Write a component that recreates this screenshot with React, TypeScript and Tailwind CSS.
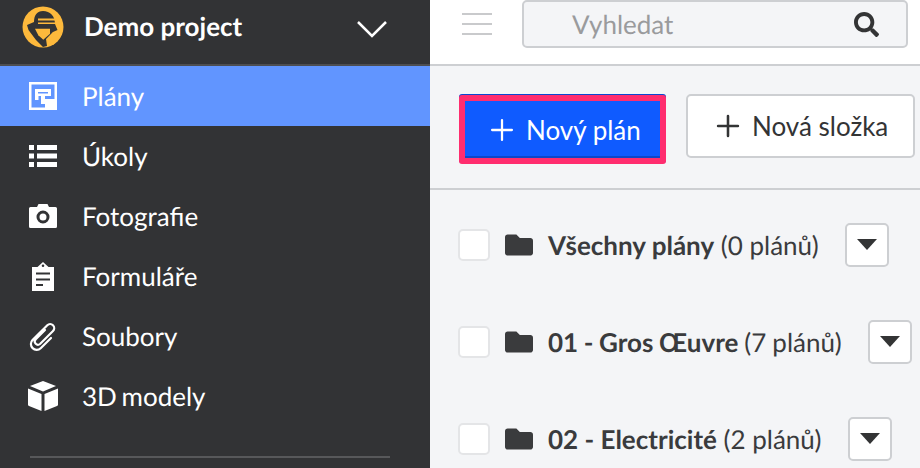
import React from 'react';
import { Plus } from 'lucide-react';
import { FaFolder, FaSearch } from 'react-icons/fa';

const NAV_ITEMS = [
  { label: 'Plány', icon: 'plan', active: true },
  { label: 'Úkoly', icon: 'list' },
  { label: 'Fotografie', icon: 'camera' },
  { label: 'Formuláře', icon: 'form' },
  { label: 'Soubory', icon: 'clip' },
  { label: '3D modely', icon: 'cube', tight: true },
];

const FOLDERS = [
  { name: 'Všechny plány', count: '(0 plánů)', spacing: '' },
  { name: '01 - Gros Œuvre', count: '(7 plánů)', spacing: '[word-spacing:-0.7px]' },
  { name: '02 - Electricité', count: '(2 plánů)', spacing: '' },
];

const NavIcon: React.FC<{ name: string }> = ({ name }) => {
  switch (name) {
    case 'plan':
      return (
        <svg width="28" height="28" viewBox="0 0 28 28" fill="white">
          <path fillRule="evenodd" d="M0 0h28v28H0zM2.500 2.500v23h23v-23z" />
          <path fillRule="evenodd" d="M6 7h16v7h-6v8h-4v-8H9.500v4H6zM9 10v1.500h10V10z" />
          <rect x="16" y="17" width="10" height="9" />
        </svg>
      );
    case 'list':
      return (
        <svg width="28" height="22" viewBox="0 0 28 22" fill="white">
          <rect x="0" y="0" width="5" height="5" />
          <rect x="8" y="0" width="20" height="5" />
          <rect x="0" y="8.500" width="5" height="5" />
          <rect x="8" y="8.500" width="20" height="5" />
          <rect x="0" y="17" width="5" height="5" />
          <rect x="8" y="17" width="20" height="5" />
        </svg>
      );
    case 'camera':
      return (
        <svg width="28" height="24" viewBox="0 0 28 24" fill="white">
          <path fillRule="evenodd" d="M8 3l1.500-3h9L20 3h6.500A1.500 1.500 0 0 1 28 4.500v18a1.500 1.500 0 0 1-1.500 1.500h-25A1.500 1.500 0 0 1 0 22.500v-18A1.500 1.500 0 0 1 1.500 3zM14 6.500a6.500 6.500 0 1 0 0 13 6.500 6.500 0 0 0 0-13zM14 9.500a3.500 3.500 0 1 1 0 7 3.500 3.500 0 0 1 0-7z" />
        </svg>
      );
    case 'form':
      return (
        <svg width="22" height="29" viewBox="0 0 22 29" fill="white">
          <path fillRule="evenodd" d="M0 5h5.500L11 0l5.500 5H22v24H0zM11 2.500a1.300 1.300 0 1 0 0 2.600 1.300 1.300 0 0 0 0-2.600zM4 10.500v2h14v-2zM4 16.500v2h14v-2zM4 22v2h7v-2z" />
        </svg>
      );
    case 'clip':
      return (
        <svg width="28" height="29" viewBox="0 0 28 29" fill="none" stroke="white" strokeWidth="2.200" strokeLinecap="round">
          <path d="M16 8L6.500 17.500a3.200 3.200 0 0 0 4.500 4.500L24 9a4 4 0 0 0-5.700-5.700L3.500 18a5.800 5.800 0 0 0 8.200 8.200L22 16" />
        </svg>
      );
    default:
      return (
        <svg width="30" height="30" viewBox="0 0 30 30" fill="white">
          <path d="M15 0l13 5-13 5.500L2 5z" />
          <path d="M0 7.500l13.500 5.500v17L1 25a1.500 1.500 0 0 1-1-1.500z" />
          <path d="M30 7.500L16.500 13v17L29 25a1.500 1.500 0 0 0 1-1.500z" />
        </svg>
      );
  }
};

const Logo = () => (
  <svg width="42" height="42" viewBox="0 0 42 42">
    <circle cx="21" cy="21" r="20.500" fill="#fdb93c" />
    <path fill="#323335" d="M5 19l7-3c0-7 3-11 9-11 7 0 12 5 12 13l2.500 6-4.500 2-7 7 1 7-4 1-7-7-7.500-10z" />
    <rect x="16" y="12.500" width="17" height="2" fill="#fdb93c" />
    <rect x="16" y="16.500" width="17" height="1.500" fill="#fdb93c" />
    <path fill="#fdb93c" d="M13 22.700h15v5l-6.700 6-5-4.400z" />
    <path fill="#fdb93c" d="M25 32.700l6.300-6.700 4 6.700-4 6.300h-6z" />
  </svg>
);

const App: React.FC = () => {
  return (
    <div className="flex h-[468px] w-[920px] overflow-hidden font-['Lato',sans-serif] [text-rendering:geometricPrecision]">
      {/* Sidebar */}
      <aside className="flex w-[430px] shrink-0 flex-col bg-[#323335] text-white">
        <div className="flex h-[64px] items-start pl-[22px] pr-[43px] pt-[6px]">
          <Logo />
          <span className="ml-[20px] mt-[7px] flex-1 text-[26px] font-bold leading-none">Demo project</span>
          <svg className="mt-[14px]" width="30" height="18" viewBox="0 0 30 18" fill="none" stroke="white" strokeWidth="2.500">
            <path d="M1 2l14 14L29 2" />
          </svg>
        </div>
        <div className="h-[2px] bg-[#4d4e50]" />
        {NAV_ITEMS.map(item => (
          <div key={item.label} className={`flex h-[60px] items-center ${item.active ? 'bg-[#6195ff]' : ''}`}>
            <div className="flex w-[82px] justify-center pl-[4px]">
              <NavIcon name={item.icon} />
            </div>
            <span className={`text-[26px] leading-none ${item.tight ? '[word-spacing:-2px]' : ''}`}>{item.label}</span>
          </div>
        ))}
        <div className="ml-[30px] mr-[40px] mt-[30px] h-[2px] bg-[#57585a]" />
      </aside>

      {/* Main */}
      <main className="flex min-w-0 flex-1 flex-col bg-[#f4f5f7]">
        <div className="flex h-[66px] shrink-0 items-start border-b-2 border-[#cdcfd2] bg-white pl-[32px] pr-[12px]">
          <div className="mt-[13px] flex w-[30px] flex-col gap-[8px]">
            <div className="h-[2px] bg-[#c9cacc]" />
            <div className="h-[2px] bg-[#c9cacc]" />
            <div className="h-[2px] bg-[#c9cacc]" />
          </div>
          <div className="ml-[30px] flex h-[48px] flex-1 items-center justify-between rounded-[5px] border-2 border-[#cdcfd2] bg-[#f4f5f7] pl-[48px] pr-[27px]">
            <span className="text-[26px] leading-none text-[#9a9b9d]">Vyhledat</span>
            <FaSearch size={25} color="#333435" />
          </div>
        </div>

        <div className="flex h-[124px] shrink-0 items-start gap-[20px] border-b-2 border-[#cdcfd2] pl-[29px] pt-[28px]">
          <button className="mt-[1px] flex h-[69px] w-[207px] items-center rounded-[3px] border-[6px] border-[#ff2d6f] bg-[#0f5bff] pl-[20px] text-[26px] text-white shadow-[0_-1px_0_#0b48d0,inset_0_-2px_0_#0d47c9]">
            <Plus size={34} strokeWidth={1.6} />
            <span className="ml-[7px] leading-none">Nový plán</span>
          </button>
          <button className="flex h-[64px] w-[229px] items-center rounded-[5px] border-2 border-[#cdcfd2] bg-white pl-[23px] text-[26px] text-[#333435]">
            <Plus size={34} strokeWidth={1.8} />
            <span className="ml-[7px] leading-none">Nová složka</span>
          </button>
        </div>

        <div className="flex flex-col gap-[32px] pl-[28px] pt-[22px]">
          {FOLDERS.map(folder => (
            <div key={folder.name} className="flex h-[65px] shrink-0 items-center text-[26px] text-[#3a3b3d]">
              <div className="h-[32px] w-[32px] rounded-[5px] border-2 border-[#e4e5e7] bg-white" />
              <FaFolder className="ml-[15px]" size={28} color="#3a3b3d" />
              <span className={`ml-[15px] whitespace-nowrap leading-none ${folder.spacing}`}>
                <b>{folder.name}</b> {folder.count}
              </span>
              <div className="ml-[26px] flex h-[44px] w-[44px] shrink-0 items-center justify-center rounded-[5px] border-2 border-[#cdcfd2] bg-white">
                <svg width="20" height="11" viewBox="0 0 20 11" fill="#333435">
                  <path d="M0 0h20L10 11z" />
                </svg>
              </div>
            </div>
          ))}
        </div>
      </main>
    </div>
  );
};

export default App;
